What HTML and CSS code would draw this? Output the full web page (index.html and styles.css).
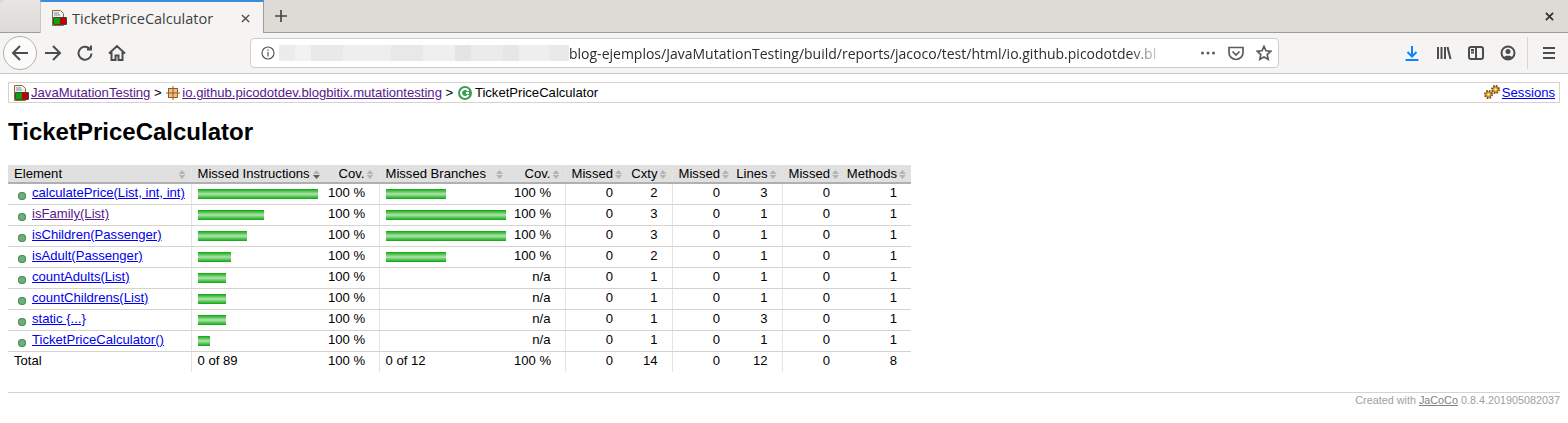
FILE: index.html
```html
<!DOCTYPE html>
<html lang="en">
<head>
    <meta charset="UTF-8">
    <title>TicketPriceCalculator</title>
    <link rel="stylesheet" href="styles.css">
</head>
<body>
    <svg class="defs" width="0" height="0">
        <symbol id="report-icon" viewBox="0 0 16 16">
            <path d="M1.500 .5h8l3 3v12h-11z" fill="#f3efe2" stroke="#8a6d2a"/>
            <path d="M3 3h5M3 5h6" stroke="#6f8fc0"/>
            <rect x="3" y="8" width="6" height="6" fill="#10a010"/>
            <rect x="9" y="8" width="6" height="6" fill="#c00000"/>
            <path d="M2.500 7.500h13v7h-13z" fill="none" stroke="#444"/>
        </symbol>
        <symbol id="gear-icon" viewBox="0 0 10 10">
            <circle cx="5" cy="5" r="3.800" fill="none" stroke="#7a5208" stroke-width="2.400" stroke-dasharray="1.800 1.180"/>
            <circle cx="5" cy="5" r="3" fill="#eeb030" stroke="#7a5208" stroke-width=".8"/>
            <circle cx="5" cy="5" r="1.200" fill="#fff4d0"/>
        </symbol>
    </svg>

    <div class="tabbar">
        <div class="tab-corner"></div>
        <div class="tab">
            <svg class="favicon"><use href="#report-icon"/></svg>
            <span class="tab-title">TicketPriceCalculator</span>
            <svg class="tab-close" viewBox="0 0 10 10"><path d="M1 1l8 8M9 1l-8 8"/></svg>
        </div>
        <svg class="new-tab" viewBox="0 0 14 14"><path d="M7 1v12M1 7h12"/></svg>
        <svg class="win-close" viewBox="0 0 10 10"><path d="M1 1l8 8M9 1l-8 8"/></svg>
    </div>

    <div class="toolbar">
        <div class="btn nav back">
            <svg viewBox="0 0 18 18"><path d="M17 9H2M9 2L2 9l7 7"/></svg>
        </div>
        <div class="btn nav">
            <svg viewBox="0 0 18 18"><path d="M1 9h15M9 2l7 7-7 7"/></svg>
        </div>
        <div class="btn nav">
            <svg viewBox="0 0 18 18"><path d="M15.500 9.500A6.500 6.500 0 1 1 13.500 4.500M15 1.500v4h-4"/></svg>
        </div>
        <div class="btn nav">
            <svg viewBox="0 0 18 18"><path d="M1 9.500L9 2l8 7.500M3.500 8v8h4v-4.500h3V16h4V8"/></svg>
        </div>
        <div class="urlbar">
            <svg class="info" viewBox="0 0 14 14">
                <circle cx="7" cy="7" r="6"/>
                <path d="M7 6v4.500M7 3.200v1.500"/>
            </svg>
            <div class="url-blur"></div>
            <div class="url-text">blog-ejemplos/JavaMutationTesting/build/reports/jacoco/test/html/io.github.picodotdev.bl</div>
            <svg class="page-action dots" viewBox="0 0 16 16"><circle cx="2.500" cy="8" r="1.500"/><circle cx="8" cy="8" r="1.500"/><circle cx="13.500" cy="8" r="1.500"/></svg>
            <svg class="page-action" viewBox="0 0 16 16"><path d="M1 2.500h14v5a7 7 0 0 1-14 0zM4.500 6.500L8 10l3.500-3.500"/></svg>
            <svg class="page-action" viewBox="0 0 16 16"><path d="M8 1.300l2 4.500 4.800.5-3.600 3.200 1 4.800L8 12l-4.200 2.300 1-4.800-3.600-3.200 4.800-.5z"/></svg>
        </div>
        <div class="tools">
            <div class="btn download">
                <svg viewBox="0 0 16 16"><path d="M8 1v10M3.500 7L8 11.500 12.500 7M1.500 15h13"/></svg>
            </div>
            <div class="btn">
                <svg viewBox="0 0 16 16"><path d="M2 2v12M5.500 2v12M9 2v12M11.500 2l3 12"/></svg>
            </div>
            <div class="btn">
                <svg viewBox="0 0 16 16"><rect x="1" y="2" width="14" height="12" rx="2"/><path d="M8 2v12M3 5h3M3 7.500h3"/></svg>
            </div>
            <div class="btn">
                <svg viewBox="0 0 16 16">
                    <circle cx="8" cy="8" r="6.500"/>
                    <circle class="solid" cx="8" cy="6.500" r="2.500"/>
                    <path class="solid" d="M3.500 12.500c1-2.500 8-2.500 9 0-2 2-7 2-9 0z"/>
                </svg>
            </div>
            <div class="tool-sep"></div>
            <div class="btn">
                <svg viewBox="0 0 16 16"><path d="M2 3h12M2 8h12M2 13h12"/></svg>
            </div>
        </div>
    </div>

    <div class="page">
        <div class="breadcrumb">
            <span class="sessions">
                <span class="gears">
                    <svg class="gear-small"><use href="#gear-icon"/></svg>
                    <svg class="gear-big"><use href="#gear-icon"/></svg>
                </span><a href="#s">Sessions</a>
            </span>
            <svg class="crumb-icon"><use href="#report-icon"/></svg><a class="seen" href="#r">JavaMutationTesting</a> &gt;
            <svg class="crumb-icon pkg" viewBox="-1 -1 16 16">
                <rect x="2" y="2" width="10" height="10" fill="#eec08c"/>
                <path d="M7 0v14M0 7h14M2 2.500h10M2 11.500h10M2.500 2v10M11.500 2v10" stroke="#9a5a20" fill="none"/>
            </svg><a class="seen" href="#p">io.github.picodotdev.blogbitix.mutationtesting</a> &gt;
            <svg class="crumb-icon" viewBox="0 0 16 16">
                <circle cx="8" cy="8" r="7" fill="#3f9b58"/>
                <path d="M11.500 6A4 4 0 1 0 11.500 10M9 8h3" stroke="#fff" stroke-width="2" fill="none"/>
            </svg>TicketPriceCalculator
        </div>

        <h1>TicketPriceCalculator</h1>

        <table class="coverage">
            <colgroup>
                <col class="c-name"><col class="c-bar"><col class="c-cov"><col class="c-bar2"><col class="c-cov2">
                <col class="c-miss"><col class="c-cxty"><col class="c-miss2"><col class="c-lines"><col class="c-miss3"><col class="c-meth">
            </colgroup>
            <thead>
                <tr>
                    <td class="sort edge">Element</td>
                    <td class="sort sorted">Missed Instructions</td>
                    <td class="sort num edge">Cov.</td>
                    <td class="sort">Missed Branches</td>
                    <td class="sort num edge">Cov.</td>
                    <td class="sort miss">Missed</td>
                    <td class="sort num edge">Cxty</td>
                    <td class="sort miss">Missed</td>
                    <td class="sort num edge">Lines</td>
                    <td class="sort miss">Missed</td>
                    <td class="sort num">Methods</td>
                </tr>
            </thead>
            <tbody>
                <tr>
                    <td class="edge"><i class="dot"></i><a href="#a">calculatePrice(List, int, int)</a></td>
                    <td><div class="bar" style="width:120px"></div></td><td class="num edge">100 %</td>
                    <td><div class="bar" style="width:60px"></div></td><td class="num edge">100 %</td>
                    <td class="miss">0</td><td class="num edge">2</td>
                    <td class="miss">0</td><td class="num edge">3</td>
                    <td class="miss">0</td><td class="num">1</td>
                </tr>
                <tr>
                    <td class="edge"><i class="dot"></i><a class="seen" href="#b">isFamily(List)</a></td>
                    <td><div class="bar" style="width:66px"></div></td><td class="num edge">100 %</td>
                    <td><div class="bar" style="width:120px"></div></td><td class="num edge">100 %</td>
                    <td class="miss">0</td><td class="num edge">3</td>
                    <td class="miss">0</td><td class="num edge">1</td>
                    <td class="miss">0</td><td class="num">1</td>
                </tr>
                <tr>
                    <td class="edge"><i class="dot"></i><a href="#c">isChildren(Passenger)</a></td>
                    <td><div class="bar" style="width:49px"></div></td><td class="num edge">100 %</td>
                    <td><div class="bar" style="width:120px"></div></td><td class="num edge">100 %</td>
                    <td class="miss">0</td><td class="num edge">3</td>
                    <td class="miss">0</td><td class="num edge">1</td>
                    <td class="miss">0</td><td class="num">1</td>
                </tr>
                <tr>
                    <td class="edge"><i class="dot"></i><a href="#d">isAdult(Passenger)</a></td>
                    <td><div class="bar" style="width:33px"></div></td><td class="num edge">100 %</td>
                    <td><div class="bar" style="width:60px"></div></td><td class="num edge">100 %</td>
                    <td class="miss">0</td><td class="num edge">2</td>
                    <td class="miss">0</td><td class="num edge">1</td>
                    <td class="miss">0</td><td class="num">1</td>
                </tr>
                <tr>
                    <td class="edge"><i class="dot"></i><a href="#e">countAdults(List)</a></td>
                    <td><div class="bar" style="width:28px"></div></td><td class="num edge">100 %</td>
                    <td></td><td class="num edge">n/a</td>
                    <td class="miss">0</td><td class="num edge">1</td>
                    <td class="miss">0</td><td class="num edge">1</td>
                    <td class="miss">0</td><td class="num">1</td>
                </tr>
                <tr>
                    <td class="edge"><i class="dot"></i><a href="#f">countChildrens(List)</a></td>
                    <td><div class="bar" style="width:28px"></div></td><td class="num edge">100 %</td>
                    <td></td><td class="num edge">n/a</td>
                    <td class="miss">0</td><td class="num edge">1</td>
                    <td class="miss">0</td><td class="num edge">1</td>
                    <td class="miss">0</td><td class="num">1</td>
                </tr>
                <tr>
                    <td class="edge"><i class="dot"></i><a href="#g">static {...}</a></td>
                    <td><div class="bar" style="width:28px"></div></td><td class="num edge">100 %</td>
                    <td></td><td class="num edge">n/a</td>
                    <td class="miss">0</td><td class="num edge">1</td>
                    <td class="miss">0</td><td class="num edge">3</td>
                    <td class="miss">0</td><td class="num">1</td>
                </tr>
                <tr>
                    <td class="edge"><i class="dot"></i><a href="#h">TicketPriceCalculator()</a></td>
                    <td><div class="bar" style="width:12px"></div></td><td class="num edge">100 %</td>
                    <td></td><td class="num edge">n/a</td>
                    <td class="miss">0</td><td class="num edge">1</td>
                    <td class="miss">0</td><td class="num edge">1</td>
                    <td class="miss">0</td><td class="num">1</td>
                </tr>
            </tbody>
            <tfoot>
                <tr>
                    <td class="edge">Total</td>
                    <td>0 of 89</td><td class="num edge">100 %</td>
                    <td>0 of 12</td><td class="num edge">100 %</td>
                    <td class="miss">0</td><td class="num edge">14</td>
                    <td class="miss">0</td><td class="num edge">12</td>
                    <td class="miss">0</td><td class="num">8</td>
                </tr>
            </tfoot>
        </table>

        <div class="footer">Created with <a href="#j">JaCoCo</a> 0.8.4.201905082037</div>
    </div>
</body>
</html>
```

FILE: styles.css
```css
html, body {
    margin: 0;
    padding: 0;
    background: #fff;
    overflow: hidden;
}
.defs {
    position: absolute;
}

/* browser chrome */
.tabbar {
    display: flex;
    align-items: stretch;
    height: 32px;
    background: #dedbd7;
    border-bottom: 1px solid #9e9c98;
}
.tab-corner {
    width: 40px;
    background: linear-gradient(#e8e6e3, #dddbd7);
    border-top-left-radius: 6px;
}
.tab {
    width: 224px;
    height: 33px;
    box-sizing: border-box;
    display: flex;
    align-items: center;
    padding: 2px 0 0 10px;
    background: #f5f4f2;
    border-top: 2px solid #3d8ce0;
    border-right: 1px solid #9e9c98;
    border-left: 1px solid #c9c7c3;
    font-family: "Open Sans", sans-serif;
    font-size: 14.500px;
    color: #3d3f42;
}
.favicon {
    width: 16px;
    height: 16px;
    margin-right: 5px;
    margin-top: -2px;
}
.tab-title {
    flex: 1;
}
.tab-close {
    width: 9px;
    height: 9px;
    margin: 0 13px 0 0;
    fill: none;
    stroke: #4a4c50;
    stroke-width: 1.500;
}
.new-tab {
    width: 14px;
    height: 14px;
    margin: 9px 0 0 10px;
    fill: none;
    stroke: #45474b;
    stroke-width: 1.700;
}
.win-close {
    width: 9px;
    height: 9px;
    margin: 12px 14px 0 auto;
    fill: none;
    stroke: #2e3436;
    stroke-width: 2;
}
.toolbar {
    display: flex;
    align-items: center;
    height: 40px;
    padding: 0 3px;
    background: #f5f4f2;
    border-bottom: 1px solid #cccac6;
}
.btn {
    width: 32px;
    height: 32px;
    display: flex;
    align-items: center;
    justify-content: center;
    flex: none;
}
.btn svg {
    width: 16px;
    height: 16px;
    fill: none;
    stroke: #4a4c50;
    stroke-width: 2;
}
.btn .solid {
    fill: #4a4c50;
    stroke: none;
}
.btn.nav svg {
    width: 18px;
    height: 18px;
}
.back {
    width: 34px;
    height: 34px;
    box-sizing: border-box;
    border: 1px solid #b4b2ae;
    border-radius: 50%;
    background: #fbfbfa;
}
.download svg {
    stroke: #0a84ff;
}
.urlbar {
    width: 1029px;
    height: 30px;
    box-sizing: border-box;
    margin-left: 117px;
    display: flex;
    align-items: center;
    background: #fff;
    border: 1px solid #cfcdc9;
    border-radius: 4px;
    font-family: "Open Sans", sans-serif;
    font-size: 14px;
    color: #2a2c2e;
}
.info {
    width: 14px;
    height: 14px;
    margin-left: 10px;
    flex: none;
    fill: none;
    stroke: #55575a;
    stroke-width: 1.200;
}
.url-blur {
    width: 290px;
    height: 16px;
    flex: none;
    margin-left: 4px;
    background: linear-gradient(90deg,
        #ececec 0 16px, #f2f2f2 16px 32px, #e9e9e9 32px 64px, #eeeeee 64px 112px,
        #e8e8e8 112px 144px, #efefef 144px 176px, #e4e4e4 176px 192px, #ebebeb 192px 224px,
        #e6e6e6 224px 240px, #eeeeee 240px 270px, #e9e9e9 270px 290px);
}
.url-text {
    width: 596px;
    flex: none;
    overflow: hidden;
    white-space: nowrap;
    -webkit-mask-image: linear-gradient(90deg, #000 94%, transparent);
    mask-image: linear-gradient(90deg, #000 94%, transparent);
}
.page-action {
    width: 16px;
    height: 16px;
    flex: none;
    margin-left: 12px;
    fill: none;
    stroke: #5a5c60;
    stroke-width: 1.700;
}
.page-action.dots {
    margin-left: 35px;
    fill: #5a5c60;
    stroke: none;
}
.tools {
    display: flex;
    align-items: center;
    margin-left: auto;
}
.tool-sep {
    width: 1px;
    height: 32px;
    background: #d8d6d2;
    margin: 0 5px 0 3px;
}

/* report */
.page {
    padding: 8px;
    font-family: "Liberation Sans", Arial, sans-serif;
    font-size: 13.100px;
    color: #000;
}
a {
    color: #0000ee;
}
a.seen {
    color: #551a8b;
}
.breadcrumb {
    border: 1px solid #d6d3ce;
    padding: 2px 4px;
    height: 15px;
    line-height: 15px;
}
.sessions {
    float: right;
}
.gears {
    display: inline-flex;
    align-items: flex-start;
    width: 16px;
    height: 14px;
    margin-right: 2px;
    vertical-align: -2px;
}
.gear-small {
    width: 9px;
    height: 9px;
    margin-top: 5px;
}
.gear-big {
    width: 9px;
    height: 9px;
    margin-left: -2px;
}
.crumb-icon {
    width: 16px;
    height: 16px;
    vertical-align: -4px;
    margin-right: 2px;
}
.pkg {
    margin-right: 1px;
}
h1 {
    font-size: 24px;
    font-weight: bold;
    margin: 15px 0 19px;
    line-height: 28px;
}
.coverage {
    border-collapse: collapse;
    table-layout: fixed;
    width: 903px;
    white-space: nowrap;
}
.c-name { width: 183px; }
.c-bar { width: 131px; }
.c-cov { width: 57px; }
.c-bar2 { width: 129px; }
.c-cov2 { width: 57px; }
.c-miss { width: 58px; }
.c-cxty { width: 49px; }
.c-miss2 { width: 58px; }
.c-lines { width: 52px; }
.c-miss3 { width: 58px; }
.c-meth { width: 71px; }
.coverage td {
    padding: 1px 6px 3px;
    height: 16px;
    line-height: 16px;
    overflow: hidden;
}
.coverage thead td {
    position: relative;
    height: 15px;
    line-height: 15px;
    padding: 1px 14px 1px 6px;
    background: #e0e0e0;
    border-bottom: 2px solid #b0b0b0;
}
.coverage tbody td {
    border-bottom: 1px solid #d6d3ce;
}
.coverage .edge {
    border-right: 1px solid #e4e4e4;
}
.coverage .num {
    text-align: right;
    padding-right: 14px;
}
.coverage .miss {
    text-align: right;
    padding-right: 10px;
}
.sort::after {
    content: "";
    position: absolute;
    right: 5px;
    top: 5px;
    width: 7px;
    height: 9px;
    background: #b4b4b4;
    clip-path: polygon(50% 0, 100% 44%, 0 44%, 50% 0, 50% 56%, 100% 56%, 50% 100%, 0 56%, 50% 56%);
}
.sort.miss::after {
    right: 1px;
}
.sort.sorted::after {
    right: 2px;
    background: linear-gradient(#b4b4b4 50%, #6b5a48 50%);
}
.bar {
    height: 10px;
    margin-top: 2px;
    background: linear-gradient(#08a808, #b0e4b0 50%, #08a808);
}
.dot {
    display: inline-block;
    width: 8px;
    height: 8px;
    margin: 0 6px 0 4px;
    vertical-align: -3px;
    border-radius: 50%;
    background: #6fae7a;
    box-shadow: inset 0 0 0 1px #4f9058;
}
.footer {
    margin-top: 20px;
    padding-top: 1px;
    border-top: 1px solid #d6d3ce;
    text-align: right;
    font-size: 10.800px;
    color: #a0a0a0;
}
.footer a {
    color: #808080;
}
```
